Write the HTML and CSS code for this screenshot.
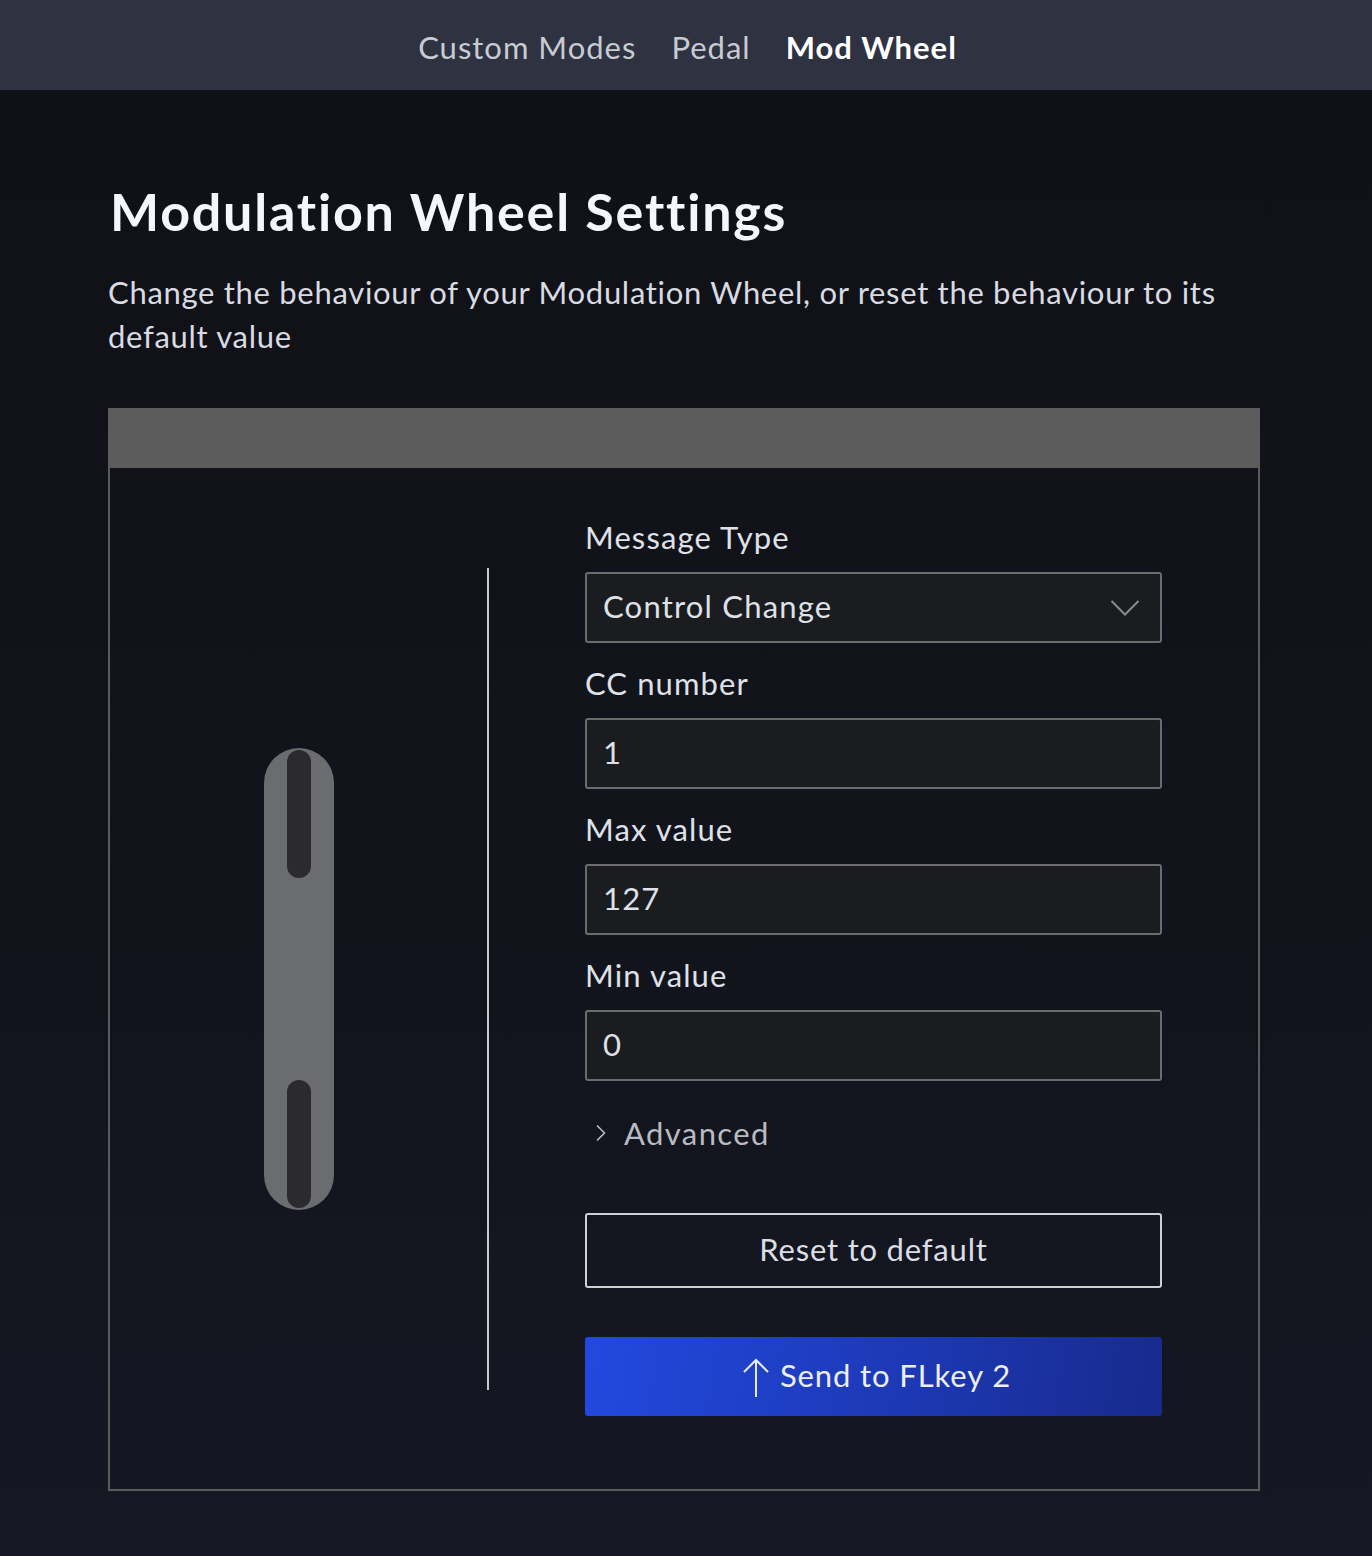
FILE: index.html
```html
<!DOCTYPE html>
<html lang="en">
<head>
<meta charset="utf-8">
<title>Modulation Wheel Settings</title>
<link rel="stylesheet" href="styles.css">
</head>
<body>
<nav class="topnav">
  <a class="nav-item">Custom Modes</a>
  <a class="nav-item">Pedal</a>
  <a class="nav-item active">Mod Wheel</a>
</nav>
<main class="page">
  <h1 class="title">Modulation Wheel Settings</h1>
  <p class="desc">Change the behaviour of your Modulation Wheel, or reset the behaviour to its default value</p>
  <section class="card">
    <div class="card-head"></div>
    <div class="card-body">
      <div class="visual">
        <div class="wheel">
          <div class="wheel-slot"></div>
          <div class="wheel-slot"></div>
        </div>
      </div>
      <form class="form">
        <div class="field">
          <label class="label">Message Type</label>
          <div class="box select">
            <span>Control Change</span>
            <svg class="chev" width="30" height="18" viewBox="0 0 30 18"><path d="M1.5 2 L15 15.5 L28.5 2" fill="none" stroke="#8a8b8f" stroke-width="2"/></svg>
          </div>
        </div>
        <div class="field">
          <label class="label">CC number</label>
          <div class="box">1</div>
        </div>
        <div class="field">
          <label class="label">Max value</label>
          <div class="box">127</div>
        </div>
        <div class="field">
          <label class="label">Min value</label>
          <div class="box">0</div>
        </div>
        <div class="advanced">
          <svg width="12" height="20" viewBox="0 0 12 20"><path d="M2 2.5 L9.5 10 L2 17.5" fill="none" stroke="#b9bbc2" stroke-width="1.6"/></svg>
          <span>Advanced</span>
        </div>
        <button type="button" class="btn-reset">Reset to default</button>
        <button type="button" class="btn-send">
          <svg width="28" height="40" viewBox="0 0 28 40"><path d="M14 39 V2 M2 14 L14 2 L26 14" fill="none" stroke="#e8eaf2" stroke-width="2"/></svg>
          <span>Send to FLkey 2</span>
        </button>
      </form>
    </div>
  </section>
</main>
</body>
</html>
```
FILE: styles.css
```css
* { box-sizing: border-box; }
html, body { margin: 0; padding: 0; }
body {
  font-family: Lato, "Noto Sans", sans-serif;
  background: linear-gradient(180deg, #101116 0%, #12141c 60%, #151823 100%);
  color: #e9ebf2;
  min-height: 1556px;
}
.topnav {
  height: 90px;
  background: #2e3241;
  display: flex;
  justify-content: center;
  align-items: center;
  gap: 35px;
  padding-left: 3px;
  padding-top: 4px;
}
.nav-item {
  font-size: 31px;
  color: #c9cbd3;
  letter-spacing: 1px;
}
.nav-item.active {
  color: #ffffff;
  font-weight: 700;
}
.page {
  padding: 88px 0 0 108px;
  width: 1260px;
}
.title {
  margin: 0 0 0 2px;
  font-size: 52px;
  line-height: 66px;
  font-weight: 700;
  color: #f6f7fc;
  letter-spacing: 1.8px;
}
.desc {
  margin: 26px 0 0 0;
  font-size: 31px;
  line-height: 44px;
  color: #d9dbe2;
  width: 1140px;
  letter-spacing: 0.7px;
}
.card {
  margin-top: 50px;
  width: 1152px;
  border: 2px solid #5b5b5b;
  border-top: none;
}
.card-head {
  height: 60px;
  background: #5c5c5c;
  margin: 0 -2px;
}
.card-body {
  display: flex;
  padding: 0;
}
.visual {
  width: 379px;
  margin: 100px 0 99px 0;
  border-right: 2px solid #c9c9cc;
  display: flex;
  align-items: center;
  justify-content: center;
}
.wheel {
  width: 70px;
  height: 462px;
  background: #6b6c70;
  border-radius: 35px;
  display: flex;
  flex-direction: column;
  justify-content: space-between;
  align-items: center;
  padding: 2px 0;
}
.wheel-slot {
  width: 24px;
  height: 128px;
  background: #2b2a2f;
  border-radius: 12px;
}
.form {
  margin-left: 96px;
  width: 577px;
  padding: 54px 0 73px 0;
  display: flex;
  flex-direction: column;
}
.field { margin-bottom: 25px; }
.label {
  display: block;
  font-size: 31px;
  line-height: 30px;
  color: #dfe1e8;
  margin-bottom: 20px;
  letter-spacing: 1.1px;
}
.box {
  height: 71px;
  background: #1b1c20;
  border: 2px solid #6c6c6f;
  border-radius: 3px;
  display: flex;
  align-items: center;
  padding: 0 16px 3px;
  font-size: 31px;
  color: #dfe1e8;
  letter-spacing: 1.2px;
}
.select { justify-content: space-between; padding-right: 20px; }
.chev { margin-top: 4px; }
.advanced {
  margin-top: 9px;
  height: 36px;
  display: flex;
  align-items: center;
  gap: 17px;
  padding-left: 10px;
  font-size: 31px;
  color: #b9bbc2;
  letter-spacing: 1.4px;
}
.btn-reset {
  margin-top: 62px;
  height: 75px;
  background: transparent;
  border: 2px solid #cfd0d4;
  border-radius: 3px;
  font-family: inherit;
  font-size: 31px;
  color: #dcdee5;
  letter-spacing: 0.8px;
  cursor: pointer;
  padding-bottom: 4px;
}
.btn-send {
  margin-top: 49px;
  height: 79px;
  border: none;
  border-radius: 3px;
  background: linear-gradient(100deg, #2249df 0%, #1d3ab9 50%, #172a8c 100%);
  font-family: inherit;
  font-size: 31px;
  color: #eceef8;
  letter-spacing: 0.9px;
  display: flex;
  align-items: center;
  justify-content: center;
  gap: 10px;
  cursor: pointer;
  padding: 0 0 4px 6px;
}
.btn-send svg { margin-top: 6px; }
```
